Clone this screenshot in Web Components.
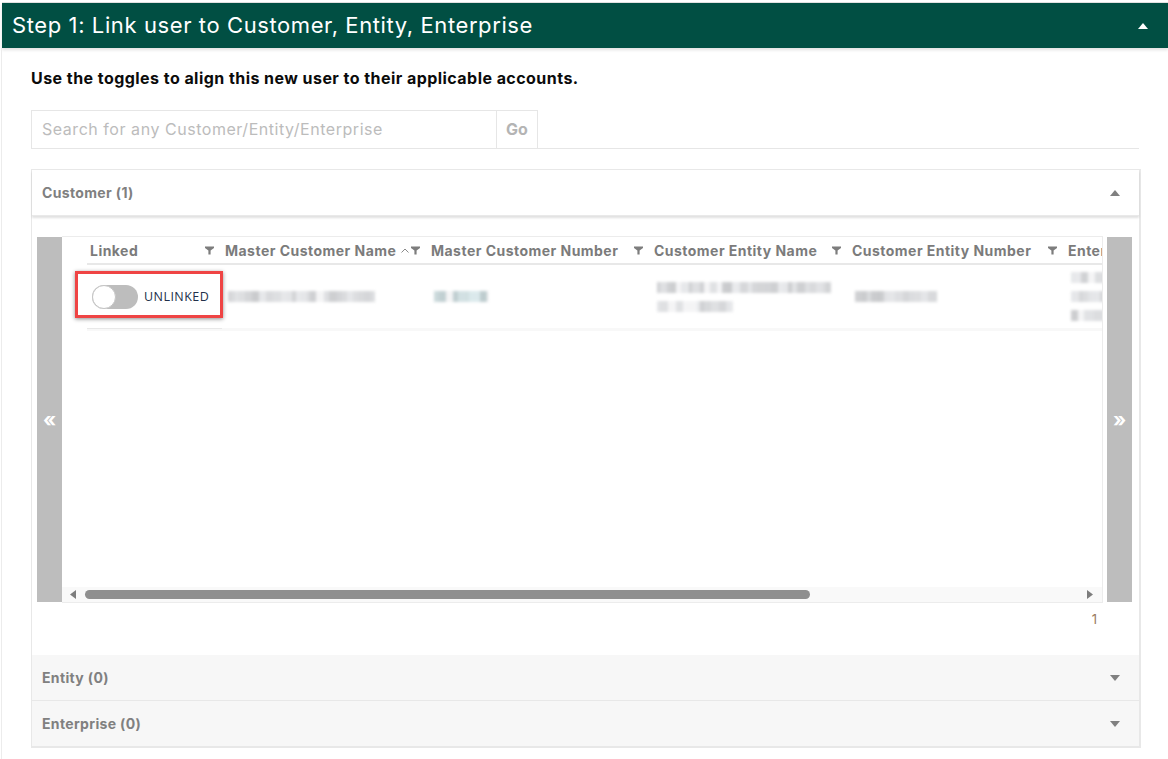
<!DOCTYPE html>
<html><head><meta charset="utf-8"><style>
html,body{margin:0;padding:0;background:#fff}
body{font-family:Inter,"Liberation Sans",sans-serif;width:1168px;height:759px;overflow:hidden}
</style></head><body>
<step-panel label="Step 1: Link user to Customer, Entity, Enterprise">
  <p-intro>Use the toggles to align this new user to their applicable accounts.</p-intro>
  <search-bar placeholder="Search for any Customer/Entity/Enterprise"></search-bar>
  <acc-group>
    <acc-item label="Customer (1)" open><grid-pager><data-grid></data-grid></grid-pager></acc-item>
    <acc-item label="Entity (0)"></acc-item>
    <acc-item label="Enterprise (0)"></acc-item>
  </acc-group>
</step-panel>
<script>
const tri=(dir,c)=>`<svg width="10" height="6" viewBox="0 0 10 6" style="display:block"><path d="${dir==='up'?'M5 0 10 6H0Z':'M0 0H10L5 6Z'}" fill="${c}"/></svg>`;
const def=(n,html)=>customElements.define(n,class extends HTMLElement{connectedCallback(){if(this.shadowRoot)return;const s=this.attachShadow({mode:'open'});s.innerHTML=typeof html==='function'?html(this):html;}});

def('step-panel',e=>`<style>
:host{display:block;padding-top:3px}
.h{margin-left:2px;height:45px;background:#014f43;color:#fff;display:flex;align-items:center;justify-content:space-between;padding:0 20px 0 10px;font-size:22px;letter-spacing:.6px;box-shadow:0 2px 3px rgba(0,0,0,.12),0 -1px 0 #e2e2e2}
.h span{padding-bottom:2px}
.b{margin-left:1px;border-left:1px solid #ececec;padding:0 28px 0 29px;height:711px;box-sizing:border-box}
</style><div class="h"><span>${e.getAttribute('label')}</span>${tri('up','#fff')}</div><div class="b"><slot></slot></div>`);

def('p-intro',`<style>:host{display:block;padding-top:21px;height:39px;box-sizing:border-box;line-height:18px;font-size:16px;font-weight:700;color:#0b0b0b;letter-spacing:.45px;white-space:nowrap}</style><slot></slot>`);

def('search-bar',e=>`<style>
:host{display:flex;height:39px;margin-top:23px;border-bottom:1px solid #e6e6e6;box-sizing:border-box;width:1108px}
.i{width:454px;border:1px solid #e6e6e6;border-bottom:0;padding-left:10px;display:flex;align-items:center;font-size:16px;color:#bcbcbc;letter-spacing:.54px;white-space:nowrap;padding-bottom:2px;box-sizing:content-box;height:36px}
.g{width:40px;border:1px solid #e6e6e6;border-left:0;border-bottom:0;display:flex;align-items:center;justify-content:center;font-size:16px;font-weight:700;color:#b4b4b4;padding-bottom:2px;height:36px}
</style><div class="i">${e.getAttribute('placeholder')}</div><div class="g">Go</div>`);

def('acc-group',`<style>:host{display:block;margin-top:20px;width:1110px;border:solid #e8e8e8;border-width:1px 2px 3px 1px;box-sizing:border-box;height:579px}</style><slot></slot>`);

def('acc-item',e=>{const o=e.hasAttribute('open');return `<style>
:host{display:block}
.h{height:45px;display:flex;align-items:center;justify-content:space-between;padding:0 19px 0 10px;font-size:14px;font-weight:700;color:#808080;background:${o?'#fff':'#f7f7f7'};letter-spacing:.35px;${o?'box-shadow:0 2px 2px rgba(0,0,0,.12);border-bottom:1px solid #e9e9e9':'border-bottom:1px solid #e8e8e8'};position:relative}
.c{height:439px;box-sizing:border-box;padding-top:21px}
</style><div class="h"><span>${e.getAttribute('label')}</span>${tri(o?'up':'down','#808080')}</div>${o?'<div class="c"><slot></slot></div>':''}`});

def('grid-pager',`<style>
:host{display:block;padding:0 6px 0 5px}
.r{display:flex;height:365px}
.n{width:25px;background:#bdbdbd;color:#fff;font-size:20px;font-weight:700;display:flex;align-items:center;justify-content:center;flex:none}
.m{width:1041px;flex:none}
.s{width:4px;flex:none}
.p{text-align:right;padding:8px 36px 0 0;font-size:13px;line-height:18px;color:#9a7a5f}
</style><div class="r"><div class="n">«</div><div class="m"><slot></slot></div><div class="s"></div><div class="n">»</div></div><div class="p">1</div>`);

const fil=`<svg class="f" width="9" height="9" viewBox="0 0 9 9" style="display:block"><path d="M0 .5H9V2L5.6 4.6V8.6H3.4V4.6L0 2Z" fill="#7d7d7d"/></svg>`;
let seed=7;const rnd=()=>(seed=(seed*16807)%2147483647)/2147483647;
const blur=(w,tint)=>{let st=[],x=0;while(x<w){const d=3+Math.floor(rnd()*6),g=rnd();let c;
  if(g<.12)c='#eeeef0';else{const v=165+Math.floor(rnd()*55);c=tint?`rgb(${v-18},${v+6},${v+10})`:`rgb(${v},${v+2},${v+6})`;}
  st.push(`${c} ${x}px ${x+d}px`);x+=d;}
  return `<i class="bl" style="width:${w}px;background:linear-gradient(90deg,${st.join(',')})"></i>`;};
def('data-grid',()=>`<style>
:host{display:block;height:367px;margin-top:-1px;box-sizing:border-box;border:solid #ececec;border-width:1px 1px 1px 0;position:relative;overflow:hidden;background:#fff}
.hd,.row{display:grid;grid-template-columns:135px 206px 223px 198px 216px 100px;margin-left:25px;width:1078px}
.hd{height:28px;box-sizing:border-box;border-bottom:2px solid #e8e8e8;font-size:14px;font-weight:700;color:#7b7b7b;letter-spacing:.47px}
.hd>div{display:flex;align-items:center;white-space:nowrap;padding-left:3px;position:relative;box-sizing:border-box}
.hd .f{position:absolute;right:8px;top:9px}
.so{position:absolute;right:19px;top:11px}
.row{height:66px;box-sizing:border-box;border-bottom:3px solid #f8f8f8}
.row>div{display:flex;flex-direction:column;justify-content:center;gap:8px;padding-left:6px;overflow:hidden}
.bl{display:block;height:11px;filter:blur(1.7px);opacity:.6}
.row>.t{flex-direction:row;align-items:center;justify-content:flex-start;gap:6px;padding-left:5px;font:12.5px "Open Sans",sans-serif;color:#22304a;letter-spacing:.45px;box-shadow:0 1px 0 #e8e8e8}
.sw{width:46px;height:24px;border-radius:12px;background:#bdbdbd;position:relative;flex:none}
.sw::before{content:"";position:absolute;left:0;top:0;width:22px;height:22px;border:1px solid #c4c4c4;border-radius:50%;background:#fff}
.mark{position:absolute;left:13px;top:34px;width:148px;height:47px;box-sizing:border-box;border:3px solid #ef4444;box-shadow:0 1px 4px rgba(0,0,0,.45)}
.sb{position:absolute;left:0;right:0;bottom:0;height:15px;background:#f9f9f9}
.th{position:absolute;left:23px;top:3px;width:725px;height:9px;border-radius:5px;background:#8f8f8f}
.sb svg{position:absolute;top:3px}
</style>
<div class="hd"><div>Linked${fil}</div><div>Master Customer Name<svg class="so" width="8" height="5" viewBox="0 0 8 5"><path d="M.5 4.5 4 1l3.5 3.5" fill="none" stroke="#8a8a8a"/></svg>${fil}</div><div>Master Customer Number${fil}</div><div>Customer Entity Name${fil}</div><div>Customer Entity Number${fil}</div><div>Enterprise</div></div>
<div class="row"><div class="t"><span class="sw"></span><span>UNLINKED</span></div><div>${blur(147)}</div><div>${blur(55,1)}</div><div>${blur(174)}${blur(76)}</div><div>${blur(82)}</div><div>${blur(36)}${blur(36)}${blur(36)}</div></div>
<div class="mark"></div>
<div class="sb"><svg style="left:8px" width="6" height="9" viewBox="0 0 6 9"><path d="M6 0V9L0 4.5Z" fill="#7d7d7d"/></svg><div class="th"></div><svg style="right:9px" width="6" height="9" viewBox="0 0 6 9"><path d="M0 0V9L6 4.5Z" fill="#7d7d7d"/></svg></div>`);
</script></body></html>
